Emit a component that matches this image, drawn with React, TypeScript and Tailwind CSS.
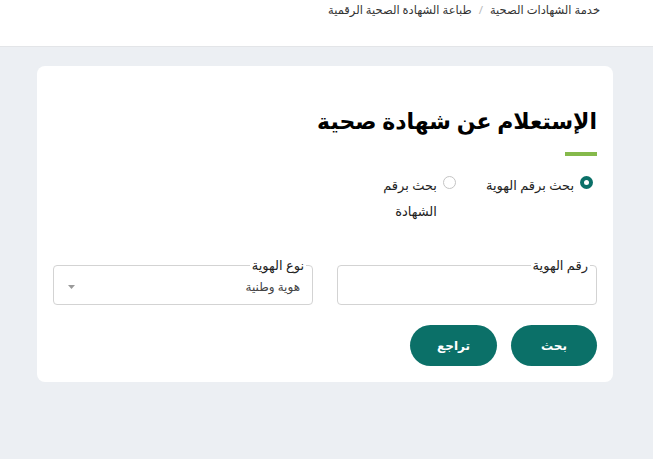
import React, { useState } from 'react';

const FONT = { fontFamily: '"Noto Sans", "DejaVu Sans", sans-serif' };

function Radio({ checked, label, onClick }: { checked: boolean; label: React.ReactNode; onClick: () => void }) {
  return (
    <label className="flex items-start gap-[6px] cursor-pointer" onClick={onClick}>
      <span
        className={`mt-[4px] w-[13px] h-[13px] rounded-full flex items-center justify-center shrink-0 ${
          checked ? 'bg-[#0b7068]' : 'border border-[#c4c4c4] bg-white'
        }`}
      >
        {checked && <span className="w-[5px] h-[5px] rounded-full bg-white" />}
      </span>
      <span className="text-[13px] leading-[26px] text-[#222]">{label}</span>
    </label>
  );
}

function Field({ label, children }: { label: string; children: React.ReactNode }) {
  return (
    <div className="relative h-[40px] border border-[#d3d3d3] rounded-[4px] px-[8px] flex items-center">
      <span className="absolute -top-[8px] right-[6px] bg-white px-[2px] text-[13px] leading-[14px] text-[#222]">
        {label}
      </span>
      {children}
    </div>
  );
}

export default function App() {
  const [mode, setMode] = useState<'id' | 'cert'>('id');

  return (
    <div dir="rtl" className="w-[653px] h-[459px] bg-[#eceff3] overflow-hidden" style={FONT}>
      {/* Breadcrumb */}
      <div className="h-[47px] bg-white border-b border-[#e3e5e8] pr-[53px] pt-[1px]">
        <div className="flex items-center gap-[7px] text-[11.5px] text-[#333]">
          <span>خدمة الشهادات الصحية</span>
          <span className="text-[#bbb]">/</span>
          <span>طباعة الشهادة الصحية الرقمية</span>
        </div>
      </div>

      {/* Card */}
      <div className="mt-[19px] mr-[40px] w-[576px] bg-white rounded-[8px] px-[16px] pt-[36px] pb-[16px]">
        <h1 className="text-[22px] font-bold text-black leading-[36px]">الإستعلام عن شهادة صحية</h1>
        <div className="mt-[14px] w-[32px] h-[4px] bg-[#85b94b]" />

        <div className="mt-[16px] flex items-start gap-[30px] pr-[4px]">
          <Radio checked={mode === 'id'} label="بحث برقم الهوية" onClick={() => setMode('id')} />
          <Radio
            checked={mode === 'cert'}
            label={<span className="block w-[60px]">بحث برقم الشهادة</span>}
            onClick={() => setMode('cert')}
          />
        </div>

        <div className="mt-[41px] grid grid-cols-2 gap-[24px]">
          <Field label="رقم الهوية">
            <input className="w-full h-[26px] outline-none text-[13px] bg-transparent" />
          </Field>
          <Field label="نوع الهوية">
            <div className="flex-1 flex items-center justify-between pr-[4px] pl-[6px] mt-[4px]">
              <span className="text-[12px] text-[#444]">هوية وطنية</span>
              <svg width="7" height="4" viewBox="0 0 7 4">
                <path d="M0 0 L7 0 L3.5 4 Z" fill="#9a9a9a" />
              </svg>
            </div>
          </Field>
        </div>

        <div className="mt-[20px] flex gap-[14px]">
          <button className="w-[86px] h-[41px] rounded-full bg-[#0b7068] text-white text-[12px] font-semibold">
            بحث
          </button>
          <button className="w-[87px] h-[41px] rounded-full bg-[#0b7068] text-white text-[12px] font-semibold">
            تراجع
          </button>
        </div>
      </div>
    </div>
  );
}
